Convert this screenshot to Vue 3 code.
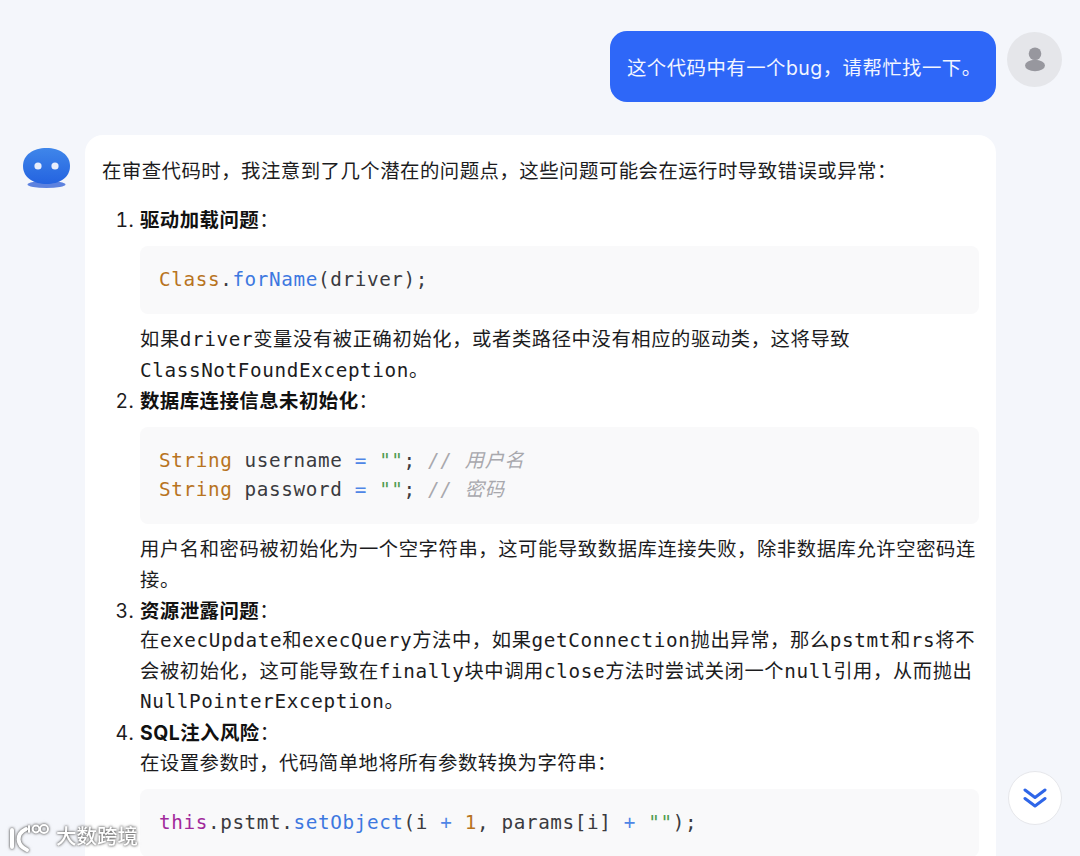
<script setup>
</script>

<template>
  <div class="page">
    <div class="row user-row">
      <div class="user-bubble">这个代码中有一个bug，请帮忙找一下。</div>
      <div class="user-avatar">
        <svg width="24" height="28" viewBox="0 0 24 28">
          <circle cx="12" cy="7.7" r="6.3" fill="#97979e" />
          <ellipse cx="12" cy="19.5" rx="10" ry="5.7" fill="#97979e" />
        </svg>
      </div>
    </div>
    <div class="row bot-row">
      <svg class="bot-avatar" width="48" height="42" viewBox="0 0 48 42">
        <defs>
          <linearGradient id="blob" x1="0" y1="0" x2="0" y2="1">
            <stop offset="0" stop-color="#3f86ea" />
            <stop offset="1" stop-color="#2463e0" />
          </linearGradient>
        </defs>
        <ellipse cx="23.5" cy="37.5" rx="19" ry="3.5" fill="#5d82df" />
        <path d="M23.5 1C37 1 47 8 47 19C47 31 36 37 23.5 37C11 37 0 31 0 19C0 8 10 1 23.5 1Z" fill="url(#blob)" />
        <circle cx="15" cy="19" r="3.6" fill="#e8eefc" />
        <circle cx="32" cy="19" r="3.6" fill="#e8eefc" />
      </svg>
      <div class="card">
        <p class="intro">在审查代码时，我注意到了几个潜在的问题点，这些问题可能会在运行时导致错误或异常：</p>
        <ol class="list">
          <li>
            <div class="head"><b>驱动加载问题</b>：</div>
            <pre class="code"><span class="ty">Class</span>.<span class="fn">forName</span>(driver);</pre>
            <div class="mono">如果driver变量没有被正确初始化，或者类路径中没有相应的驱动类，这将导致ClassNotFoundException。</div>
          </li>
          <li>
            <div class="head"><b>数据库连接信息未初始化</b>：</div>
            <pre class="code"><span class="ty">String</span> username <span class="op">=</span> <span class="st">""</span>; <span class="cm">// 用户名</span>
<span class="ty">String</span> password <span class="op">=</span> <span class="st">""</span>; <span class="cm">// 密码</span></pre>
            <div class="mono">用户名和密码被初始化为一个空字符串，这可能导致数据库连接失败，除非数据库允许空密码连接。</div>
          </li>
          <li>
            <div class="head"><b>资源泄露问题</b>：</div>
            <div class="mono">在execUpdate和execQuery方法中，如果getConnection抛出异常，那么pstmt和rs将不会被初始化，这可能导致在finally块中调用close方法时尝试关闭一个null引用，从而抛出NullPointerException。</div>
          </li>
          <li>
            <div class="head"><b>SQL注入风险</b>：</div>
            <div class="plain">在设置参数时，代码简单地将所有参数转换为字符串：</div>
            <pre class="code"><span class="kw">this</span>.pstmt.<span class="fn">setObject</span>(i <span class="op">+</span> <span class="nu">1</span>, params[i] <span class="op">+</span> <span class="st">""</span>);</pre>
          </li>
        </ol>
      </div>
    </div>
    <button class="down" aria-label="滚动到底部">
      <svg width="24" height="22" viewBox="0 0 24 22" fill="none" stroke="#2f66e8" stroke-width="3" stroke-linecap="round" stroke-linejoin="round">
        <path d="M2 3L12 10.5L22 3" />
        <path d="M2 11.5L12 19L22 11.5" />
      </svg>
    </button>
    <div class="mark">
      <svg width="42" height="32" viewBox="0 0 42 32" fill="none" stroke="#fff" stroke-width="2" stroke-linecap="round">
        <path d="M4 9V26" stroke-width="4" />
        <path d="M18 8C8 13 8 24 19 29" stroke-width="4" />
        <path d="M21 5V11" stroke-width="2" />
        <circle cx="28" cy="8" r="3.4" />
        <circle cx="36" cy="8" r="4" />
      </svg>
      <span>大数跨境</span>
    </div>
  </div>
</template>

<style>
html, body { margin: 0; padding: 0; }
</style>

<style scoped>
.page {
  position: relative;
  box-sizing: border-box;
  width: 1080px;
  height: 856px;
  overflow: hidden;
  background: #f4f6fb;
  padding: 31px 18px 0 23px;
  font-family: Inter, "Noto Sans CJK SC", sans-serif;
  font-size: 19.4px;
  letter-spacing: 0.48px;
  color: #1c1c1e;
}
.row { display: flex; }
.user-row { justify-content: flex-end; align-items: flex-start; gap: 11px; }
.user-bubble {
  box-sizing: border-box;
  width: 386px;
  height: 71px;
  border-radius: 17px;
  background: #2e67f8;
  color: #f2f5ff;
  padding: 0 17px;
  display: flex;
  align-items: center;
  white-space: nowrap;
}
.user-avatar {
  width: 55px;
  height: 55px;
  margin-top: 1px;
  border-radius: 50%;
  background: #e5e6ea;
  display: flex;
  align-items: center;
  justify-content: center;
}
.bot-row { margin-top: 33px; gap: 14px; align-items: flex-start; }
.bot-avatar { flex: none; margin-top: 12px; width: 48px; }
.card {
  box-sizing: border-box;
  width: 911px;
  background: #fff;
  border-radius: 18px;
  padding: 21px 17px 60px;
  line-height: 30.45px;
}
.intro { margin: 0 0 18.6px; }
.list { margin: 0; padding: 0 0 0 38px; }
.head b { font-weight: 700; color: #111; }
.code {
  margin: 10.8px 0;
  padding: 18.5px 19px 20.5px;
  background: #f9f9fa;
  border-radius: 8px;
  font-family: "DejaVu Sans Mono", "Noto Sans CJK SC", monospace;
  font-size: 19.3px;
  letter-spacing: 0.62px;
  line-height: 29px;
  color: #3b3b40;
  white-space: pre;
}
.mono {
  font-family: "DejaVu Sans Mono", "Noto Sans CJK SC", monospace;
  font-size: 19.3px;
  letter-spacing: 0.62px;
}
.ty { color: #b8741f; }
.fn { color: #3d78e0; }
.op { color: #4f86e6; }
.st { color: #4f9d4f; }
.cm { color: #a8a8ad; font-style: italic; }
.kw { color: #a12a9c; }
.nu { color: #b8741f; }
.down {
  position: absolute;
  left: 1008px;
  top: 771px;
  width: 54px;
  height: 54px;
  border-radius: 50%;
  background: #fff;
  border: 1px solid #e6e7eb;
  box-sizing: border-box;
  padding: 0;
  display: flex;
  align-items: center;
  justify-content: center;
}
.mark {
  position: absolute;
  left: 8px;
  top: 821px;
  display: flex;
  align-items: center;
  gap: 6px;
  color: #fff;
  font-size: 20.5px;
  font-weight: 500;
  letter-spacing: 0;
  line-height: 32px;
  filter: drop-shadow(0 0 1px rgba(80, 80, 80, 0.9)) drop-shadow(0 0 1.5px rgba(120, 120, 120, 0.6));
}
</style>
